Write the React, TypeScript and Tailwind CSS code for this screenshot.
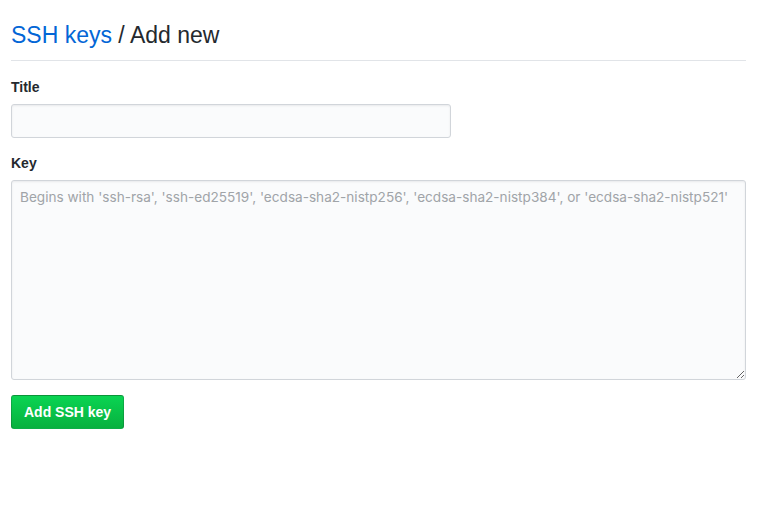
import React from 'react';

const App: React.FC = () => {
  return (
    <div className="min-h-screen bg-white font-['Liberation_Sans',Arial,sans-serif] text-[#24292e]">
      <div className="w-[735px] ml-[11px] pt-[18px]">
        {/* Subhead */}
        <div className="border-b border-[#e1e4e8] pb-[8px] mb-[16px]">
          <h2 className="text-[23px] leading-[34px] font-normal">
            <a href="#" className="text-[#0366d6]">SSH keys</a> / Add new
          </h2>
        </div>

        <form onSubmit={(e) => e.preventDefault()}>
          <div className="mb-[15px]">
            <label className="block text-[14px] leading-[21px] font-bold mb-[6px]">Title</label>
            <input
              type="text"
              className="block w-[440px] h-[34px] px-[8px] text-[14px] bg-[#fafbfc] border border-[#d1d5da] rounded-[3px] shadow-[inset_0_1px_2px_rgba(27,31,35,0.075)] outline-none"
            />
          </div>

          <div className="mb-[15px]">
            <label className="block text-[14px] leading-[21px] font-bold mb-[6px]">Key</label>
            <textarea
              placeholder="Begins with 'ssh-rsa', 'ssh-ed25519', 'ecdsa-sha2-nistp256', 'ecdsa-sha2-nistp384', or 'ecdsa-sha2-nistp521'"
              className="block w-full h-[200px] px-[8px] py-[6px] font-['Inter',sans-serif] text-[13.6px] leading-[20px] bg-[#fafbfc] border border-[#d1d5da] rounded-[3px] shadow-[inset_0_1px_2px_rgba(27,31,35,0.075)] outline-none placeholder:text-[#a0a4a8] resize"
            />
          </div>

          <button
            type="submit"
            className="h-[34px] px-[12px] text-[14px] font-bold text-white rounded-[3px] border border-[rgba(27,31,35,0.2)] bg-gradient-to-b from-[#0ad452] to-[#08b13f]"
          >
            Add SSH key
          </button>
        </form>
      </div>
    </div>
  );
};

export default App;
